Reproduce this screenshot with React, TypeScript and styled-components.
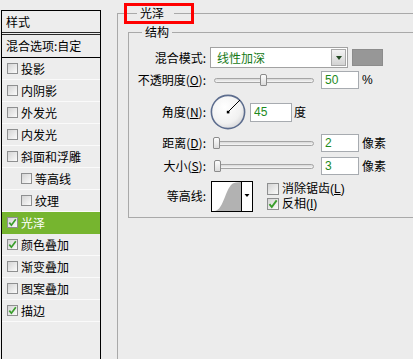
import React from 'react';
import styled, { createGlobalStyle } from 'styled-components';

const GlobalStyle = createGlobalStyle`
  html, body { margin: 0; padding: 0; }
  body {
    background: #ececec;
    font-family: "Noto Sans CJK SC", "Liberation Sans", sans-serif;
    font-size: 12px;
    line-height: 16px;
    color: #000;
  }
  #root { width: 413px; height: 359px; overflow: hidden; }
`;

const Page = styled.div`
  position: relative;
  display: flex;
  align-items: flex-start;
  width: 413px;
  height: 359px;
  overflow: hidden;
  background: #ececec;
`;

/* ---------- left: style list ---------- */

const StylesPanel = styled.div`
  box-sizing: border-box;
  flex: none;
  width: 100px;
  height: 352px;
  margin: 10px 0 0 1px;
  border: 1px solid #000;
  border-bottom: none;
  background: #ededed;
  display: flex;
  flex-direction: column;
`;

const PanelHeader = styled.div`
  box-sizing: border-box;
  height: 24px;
  padding-left: 4px;
  border-bottom: 3px double #2a2a2a;
  line-height: 21px;
`;

const BlendRow = styled.div`
  box-sizing: border-box;
  height: 23px;
  padding-left: 4px;
  border-bottom: 1px solid #000;
  line-height: 22px;
  white-space: nowrap;
`;

const StyleItem = styled.div<{ $indent?: boolean; $selected?: boolean }>`
  box-sizing: border-box;
  height: 22px;
  display: flex;
  align-items: center;
  gap: 3px;
  padding-left: ${(p) => (p.$indent ? 19 : 5)}px;
  border-bottom: 1px solid ${(p) => (p.$selected ? '#76b52f' : '#fafafa')};
  background: ${(p) => (p.$selected ? '#76b52f' : 'transparent')};
  color: ${(p) => (p.$selected ? '#fff' : '#000')};
  white-space: nowrap;
`;

const Box = styled.span<{ $size: number }>`
  box-sizing: border-box;
  flex: none;
  width: ${(p) => p.$size}px;
  height: ${(p) => p.$size}px;
  border: 1px solid #8e8f90;
  background: linear-gradient(135deg, #d4d4d4 0%, #efefef 70%, #fbfbfb 100%);
  display: inline-flex;
  align-items: center;
  justify-content: center;
`;

const CheckBox: React.FC<{ checked?: boolean; size?: number }> = ({ checked, size = 11 }) => (
  <Box $size={size}>
    {checked && (
      <svg width={size - 2} height={size - 2} viewBox="0 0 9 9">
        <path d="M1.3 4.6 L3.4 7.2 L7.8 1.2" fill="none" stroke="#3a9e2c" strokeWidth="1.7" />
      </svg>
    )}
  </Box>
);

/* ---------- right: options ---------- */

const Content = styled.div`
  flex: 1;
  align-self: stretch;
  display: flex;
  padding-left: 16px;
  min-width: 0;
`;

const OuterGroup = styled.fieldset`
  flex: 1;
  min-width: 0;
  margin: 5px 0 0 0;
  padding: 0 0 0 10px;
  border: 1px solid #a9a9a9;
  border-right: none;
  border-bottom: none;
`;

const GroupLegend = styled.legend<{ $ml: number; $pr: number }>`
  margin-left: ${(p) => p.$ml}px;
  padding: 0 ${(p) => p.$pr}px 0 3px;
  line-height: 16px;
  font-size: 12px;
`;

const InnerGroup = styled.fieldset`
  margin: 3px 0 0 0;
  padding: 7px 0 6px 0;
  border: 1px solid #a9a9a9;
  border-right: none;
  min-width: 0;
`;

const Row = styled.div<{ $h: number; $mt: number }>`
  display: flex;
  align-items: center;
  height: ${(p) => p.$h}px;
  margin-top: ${(p) => p.$mt}px;
`;

const FieldLabel = styled.div`
  flex: none;
  width: 77px;
  margin-right: 4px;
  text-align: right;
  white-space: nowrap;
  line-height: 16px;
`;

const Select = styled.div`
  box-sizing: border-box;
  flex: none;
  width: 138px;
  height: 21px;
  padding: 1px;
  border: 1px solid #a2a2a2;
  background: #fff;
  display: flex;
  align-items: center;
`;

const SelectText = styled.span`
  flex: 1;
  padding-left: 5px;
  color: #167a16;
  line-height: 17px;
`;

const SelectButton = styled.span`
  box-sizing: border-box;
  width: 15px;
  height: 17px;
  border: 1px solid #a9a9a9;
  background: linear-gradient(#f4f4f4, #d3d3d3);
  display: flex;
  align-items: center;
  justify-content: center;
`;

const DownTriangle = styled.span`
  width: 0;
  height: 0;
  border-left: 3px solid transparent;
  border-right: 3px solid transparent;
  border-top: 4px solid #244a24;
`;

const Swatch = styled.div`
  box-sizing: border-box;
  flex: none;
  width: 31px;
  height: 17px;
  margin-left: 4px;
  border: 1px solid #8c8c8c;
  background: #979797;
`;

const SliderTrack = styled.div`
  position: relative;
  box-sizing: border-box;
  flex: none;
  width: 100px;
  height: 5px;
  margin: 0 7px 0 4px;
  border: 1px solid #a5a5a5;
  border-radius: 3px;
  background: linear-gradient(#d9d9d9, #f7f7f7);
`;

const SliderThumb = styled.div`
  position: absolute;
  top: 50%;
  box-sizing: border-box;
  width: 7px;
  height: 12px;
  margin: -6px 0 0 -4px;
  border: 1px solid #8b8b8b;
  border-radius: 2px 2px 1px 1px;
  background: linear-gradient(#fdfdfd, #dcdcdc);
`;

const NumberBox = styled.input<{ $w: number; $h: number; $ml?: number }>`
  box-sizing: border-box;
  flex: none;
  width: ${(p) => p.$w}px;
  height: ${(p) => p.$h}px;
  margin: 0 0 0 ${(p) => p.$ml ?? 0}px;
  padding: 0 0 0 3px;
  border: 1px solid #a7abb0;
  background: #fff;
  font: 12px "Liberation Sans", sans-serif;
  color: #1d8a1d;
  outline: none;
`;

const Unit = styled.span<{ $ml: number }>`
  margin-left: ${(p) => p.$ml}px;
  white-space: nowrap;
`;

const PercentUnit = styled.span`
  margin-left: 3px;
  font: 12px "Liberation Sans", sans-serif;
`;

const Dial = styled.svg`
  flex: none;
  width: 36px;
  height: 36px;
`;

const ContourPicker = styled.div`
  box-sizing: border-box;
  flex: none;
  width: 42px;
  height: 31px;
  margin-left: 1px;
  border: 1px solid #000;
  background: #fff;
  display: flex;
`;

const Options = styled.div`
  display: flex;
  flex-direction: column;
  margin-left: 14px;
`;

const Option = styled.label`
  display: flex;
  align-items: center;
  gap: 3px;
  height: 15px;
  line-height: 14px;
  font-family: "Liberation Sans", "Noto Sans CJK SC", sans-serif;
  white-space: nowrap;
`;

const Annotation = styled.div`
  position: absolute;
  left: 124px;
  top: 3px;
  box-sizing: border-box;
  width: 70px;
  height: 21px;
  border: 3px solid #ff0000;
  pointer-events: none;
`;

const Slider: React.FC<{ pct: number }> = ({ pct }) => (
  <SliderTrack>
    <SliderThumb style={{ left: `${pct}%` }} />
  </SliderTrack>
);

const items = [
  { label: '投影' },
  { label: '内阴影' },
  { label: '外发光' },
  { label: '内发光' },
  { label: '斜面和浮雕' },
  { label: '等高线', indent: true },
  { label: '纹理', indent: true },
  { label: '光泽', checked: true, selected: true },
  { label: '颜色叠加', checked: true },
  { label: '渐变叠加' },
  { label: '图案叠加' },
  { label: '描边', checked: true },
];

export default function App() {
  return (
    <Page>
      <GlobalStyle />
      <StylesPanel>
        <PanelHeader>样式</PanelHeader>
        <BlendRow>混合选项:自定</BlendRow>
        {items.map((it) => (
          <StyleItem key={it.label} $indent={it.indent} $selected={it.selected}>
            <CheckBox checked={it.checked} />
            <span>{it.label}</span>
          </StyleItem>
        ))}
      </StylesPanel>

      <Content>
        <OuterGroup>
          <GroupLegend $ml={9} $pr={10}>光泽</GroupLegend>
          <InnerGroup>
            <GroupLegend $ml={13} $pr={3}>结构</GroupLegend>

            <Row $h={21} $mt={0}>
              <FieldLabel>混合模式:</FieldLabel>
              <Select>
                <SelectText>线性加深</SelectText>
                <SelectButton>
                  <DownTriangle />
                </SelectButton>
              </Select>
              <Swatch />
            </Row>

            <Row $h={18} $mt={3}>
              <FieldLabel>
                不透明度(<u>O</u>):
              </FieldLabel>
              <Slider pct={50} />
              <NumberBox $w={38} $h={18} defaultValue="50" readOnly />
              <PercentUnit>%</PercentUnit>
            </Row>

            <Row $h={36} $mt={5}>
              <FieldLabel>
                角度(<u>N</u>):
              </FieldLabel>
              <Dial viewBox="0 0 36 36">
                <defs>
                  <radialGradient id="dialFill" cx="40%" cy="35%" r="70%">
                    <stop offset="0%" stopColor="#ffffff" />
                    <stop offset="70%" stopColor="#f1f1f1" />
                    <stop offset="100%" stopColor="#d6d6d8" />
                  </radialGradient>
                </defs>
                <circle cx="18" cy="18" r="16.6" fill="url(#dialFill)" stroke="#5d6d8e" strokeWidth="1.6" />
                <line x1="18" y1="18" x2="30" y2="6" stroke="#000" strokeWidth="1" />
                <rect x="16.8" y="16.8" width="2.6" height="2.6" fill="#000" />
              </Dial>
              <NumberBox $w={42} $h={19} $ml={4} defaultValue="45" readOnly />
              <Unit $ml={2}>度</Unit>
            </Row>

            <Row $h={18} $mt={4}>
              <FieldLabel>
                距离(<u>D</u>):
              </FieldLabel>
              <Slider pct={2} />
              <NumberBox $w={38} $h={18} defaultValue="2" readOnly />
              <Unit $ml={3}>像素</Unit>
            </Row>

            <Row $h={18} $mt={5}>
              <FieldLabel>
                大小(<u>S</u>):
              </FieldLabel>
              <Slider pct={3} />
              <NumberBox $w={38} $h={18} defaultValue="3" readOnly />
              <Unit $ml={3}>像素</Unit>
            </Row>

            <Row $h={30} $mt={6}>
              <FieldLabel>等高线:</FieldLabel>
              <ContourPicker>
                <svg width="40" height="29" viewBox="0 0 40 29">
                  <path d="M2 29 C 13 29, 13 1, 24 0.5 L29 0 L29 29 Z" fill="#b2b2b2" />
                  <line x1="29.5" y1="0" x2="29.5" y2="29" stroke="#000" strokeWidth="1" />
                  <path d="M32.5 12 L37.5 12 L35 15 Z" fill="#000" />
                </svg>
              </ContourPicker>
              <Options>
                <Option>
                  <CheckBox size={12} />
                  <span>
                    消除锯齿(<u>L</u>)
                  </span>
                </Option>
                <Option>
                  <CheckBox size={12} checked />
                  <span>
                    反相(<u>I</u>)
                  </span>
                </Option>
              </Options>
            </Row>
          </InnerGroup>
        </OuterGroup>
      </Content>

      <Annotation />
    </Page>
  );
}
